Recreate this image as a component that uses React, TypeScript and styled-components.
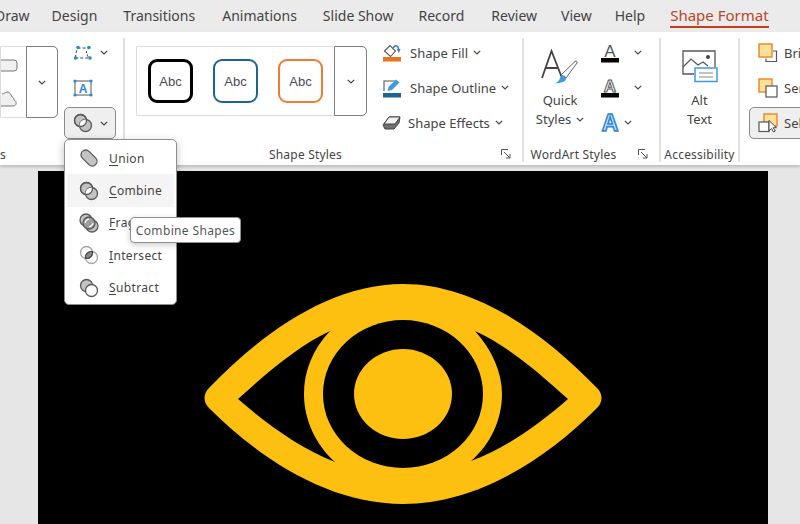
import React from "react";
import styled, { createGlobalStyle } from "styled-components";

const GlobalStyle = createGlobalStyle`
  html, body {
    margin: 0;
    padding: 0;
    background: #e6e6e6;
  }
  * {
    box-sizing: border-box;
  }
  svg {
    flex: none;
  }
`;

const Page = styled.div`
  position: relative;
  width: 800px;
  height: 524px;
  overflow: hidden;
  display: flex;
  flex-direction: column;
  background: #e6e6e6;
  color: #444;
  font-family: "Noto Sans", "Open Sans", sans-serif;
  font-size: 13px;
`;

const TabBar = styled.div`
  display: flex;
  align-items: flex-start;
  height: 32px;
  flex: none;
  background: #ebebeb;
`;

const Tab = styled.div<{ $left: number; $active?: boolean }>`
  position: relative;
  margin-left: ${(p) => p.$left}px;
  height: 32px;
  line-height: 31px;
  font-size: ${(p) => (p.$active ? 15 : 14)}px;
  white-space: nowrap;
  color: ${(p) => (p.$active ? "#b7472a" : "#444")};

  &::after {
    content: "";
    display: ${(p) => (p.$active ? "block" : "none")};
    position: absolute;
    left: 0;
    right: 0;
    top: 26px;
    height: 2px;
    background: #c43e1c;
  }
`;

const Ribbon = styled.div`
  display: flex;
  flex: none;
  height: 133px;
  padding: 6px 0 3px;
  background: #fff;
  box-shadow: 0 2px 3px rgba(0, 0, 0, 0.18);
  z-index: 1;
`;

const Group = styled.div<{ $width: number; $last?: boolean }>`
  display: flex;
  flex-direction: column;
  flex: none;
  width: ${(p) => p.$width}px;
  border-right: ${(p) => (p.$last ? "none" : "2px solid #e1e1e1")};
`;

const GroupBody = styled.div`
  display: flex;
  height: 110px;
`;

const LabelRow = styled.div`
  display: flex;
  align-items: center;
  height: 14px;
`;

const GroupLabel = styled.div<{ $align?: string }>`
  flex: 1;
  font-size: 12px;
  line-height: 14px;
  letter-spacing: 0.2px;
  white-space: nowrap;
  text-align: ${(p) => p.$align || "center"};
`;

const Launcher = styled.svg`
  width: 10px;
  height: 10px;
  margin: -2px 11px 0 15px;
`;

const Gallery = styled.div<{ $width: number; $height: number; $left: number }>`
  display: flex;
  flex: none;
  width: ${(p) => p.$width}px;
  height: ${(p) => p.$height}px;
  margin: 8px 0 0 ${(p) => p.$left}px;
  background: #fff;
  border: 1px solid #dcdcdc;
  border-radius: 0 5px 5px 0;
`;

const ThumbRow = styled.div`
  flex: 1;
  display: flex;
  align-items: center;
  gap: 20px;
  padding-left: 11px;
`;

const Thumb = styled.div<{ $color: string; $thick?: boolean }>`
  width: 45px;
  height: 44px;
  display: flex;
  align-items: center;
  justify-content: center;
  border: ${(p) => (p.$thick ? 3 : 2.5)}px solid ${(p) => p.$color};
  border-radius: 9px;
  font-family: "Liberation Sans", Arial, sans-serif;
  font-size: 13px;
  color: #4a4a5a;
`;

const ShapeStack = styled.div`
  flex: 1;
  display: flex;
  flex-direction: column;
  padding-top: 12px;
  gap: 19px;
`;

const MoreButton = styled.div<{ $width: number }>`
  display: flex;
  flex: none;
  align-items: center;
  justify-content: center;
  width: ${(p) => p.$width}px;
  margin: -1px -1px -1px 0;
  border: 1px solid #7f7f7f;
  border-radius: 0 5px 5px 0;
`;

const ToolColumn = styled.div<{ $left: number; $width?: number }>`
  display: flex;
  flex-direction: column;
  flex: none;
  gap: 4px;
  margin: -1px 0 0 ${(p) => p.$left}px;
  width: ${(p) => (p.$width ? `${p.$width}px` : "auto")};
`;

const ToolRow = styled.div<{ $left?: number; $gap?: number }>`
  display: flex;
  align-items: center;
  height: 31px;
  gap: ${(p) => p.$gap ?? 6}px;
  padding-left: ${(p) => p.$left ?? 0}px;
  white-space: nowrap;
  font-size: 13px;
`;

const RowText = styled.span`
  display: inline-flex;
  align-items: center;
  gap: 5px;
`;

const PressedButton = styled.div<{ $left?: number; $gap?: number }>`
  display: flex;
  align-items: center;
  height: 32px;
  gap: ${(p) => p.$gap ?? 6}px;
  padding-left: ${(p) => p.$left ?? 0}px;
  background: #efefef;
  border: 1px solid #8a8a8a;
  border-radius: 5px;
  white-space: nowrap;
`;

const TallButton = styled.div<{ $width: number }>`
  display: flex;
  flex-direction: column;
  align-items: center;
  flex: none;
  width: ${(p) => p.$width}px;
  padding-top: 6px;
`;

const IconSlot = styled.div`
  display: flex;
  align-items: center;
  justify-content: center;
  height: 44px;
`;

const TallText = styled.div`
  margin-top: 3px;
  text-align: center;
  font-size: 13px;
  line-height: 19px;
  white-space: nowrap;
`;

const Canvas = styled.div`
  flex: 1;
  padding: 6px 0 0 38px;
  min-height: 0;
`;

const Slide = styled.div`
  display: flex;
  justify-content: center;
  width: 730px;
  height: 353px;
  padding-top: 113px;
  background: #000;
`;

const Menu = styled.div`
  position: absolute;
  left: 64px;
  top: 139px;
  width: 113px;
  height: 166px;
  padding: 2px;
  background: #fff;
  border: 1px solid #8f8f8f;
  border-radius: 5px;
  box-shadow: 0 3px 8px rgba(0, 0, 0, 0.25);
  z-index: 2;
`;

const MenuItem = styled.div<{ $active?: boolean }>`
  display: flex;
  align-items: center;
  gap: 10px;
  height: 32.4px;
  padding-left: 12px;
  font-size: 12px;
  letter-spacing: 0.35px;
  white-space: nowrap;
  background: ${(p) => (p.$active ? "#f5f4f4" : "transparent")};

  u {
    text-underline-offset: 2px;
  }
`;

const Tooltip = styled.div`
  position: absolute;
  left: 130px;
  top: 217px;
  width: 111px;
  height: 26px;
  line-height: 25px;
  text-align: center;
  font-size: 12px;
  letter-spacing: 0.35px;
  white-space: nowrap;
  color: #555;
  background: #fff;
  border: 1px solid #8f8f8f;
  border-radius: 4px;
  box-shadow: 0 2px 6px rgba(0, 0, 0, 0.2);
  z-index: 3;
`;

const Chevron = () => (
  <svg width="8" height="5" viewBox="0 0 8 5">
    <path d="M.8.8 4 4 7.200.8" fill="none" stroke="#444" strokeWidth="1.2" />
  </svg>
);

const LauncherIcon = () => (
  <Launcher viewBox="0 0 10 10">
    <path d="M.5 6V.5H7M3 3l6 6M9 5v4H5" fill="none" stroke="#555" strokeWidth="1" />
  </Launcher>
);

const EditShapeIcon = () => (
  <svg width="20" height="16" viewBox="0 0 20 16">
    <path d="M2.500 13C2.500 9 3 6 5 3h11l-3 4 2 2-1 1 2 3H2.500" fill="none" stroke="#444" strokeWidth="1" strokeDasharray="3 2" />
    <g fill="#2b88d8">
      <circle cx="2.500" cy="13" r="1.800" />
      <circle cx="5" cy="2.500" r="1.800" />
      <circle cx="16" cy="2.500" r="1.800" />
      <circle cx="17" cy="13" r="1.800" />
    </g>
  </svg>
);

const TextBoxIcon = () => (
  <svg width="20" height="18" viewBox="0 0 20 18">
    <rect x="2" y="2" width="16" height="14" fill="none" stroke="#555" strokeWidth="1" />
    <g fill="#2b88d8">
      <circle cx="2" cy="2" r="1.600" />
      <circle cx="18" cy="2" r="1.600" />
      <circle cx="2" cy="16" r="1.600" />
      <circle cx="18" cy="16" r="1.600" />
    </g>
    <text x="10" y="14" textAnchor="middle" fontFamily="Liberation Sans" fontWeight="700" fontSize="12" fill="#2b88d8">A</text>
  </svg>
);

const MergeIcon = ({ kind, id }: { kind: string; id: string }) => {
  const stroke = "#5a5a5a";
  const gray = "#c4c2c2";
  if (kind === "union") {
    return (
      <svg width="20" height="20" viewBox="0 0 20 20">
        <path d="M3.400 3.400a4.700 4.700 0 0 1 6.700 0l6.500 6.500a4.700 4.700 0 0 1-6.700 6.700L3.400 10.100a4.700 4.700 0 0 1 0-6.700Z" fill={gray} stroke={stroke} strokeWidth="1.300" />
      </svg>
    );
  }
  const clipId = `clip-${id}`;
  return (
    <svg width="20" height="20" viewBox="0 0 20 20">
      <defs>
        <clipPath id={clipId}>
          <circle cx="7.500" cy="7.500" r="6" />
        </clipPath>
      </defs>
      {kind === "combine" && (
        <>
          <circle cx="7.500" cy="7.500" r="6" fill={gray} stroke={stroke} strokeWidth="1.300" />
          <circle cx="12.500" cy="12.500" r="6" fill={gray} stroke={stroke} strokeWidth="1.300" />
          <circle cx="12.500" cy="12.500" r="6" fill="#fff" clipPath={`url(#${clipId})`} />
          <circle cx="7.500" cy="7.500" r="6" fill="none" stroke={stroke} strokeWidth="1.300" />
        </>
      )}
      {kind === "fragment" && (
        <>
          <circle cx="7" cy="7" r="6" fill={gray} stroke={stroke} strokeWidth="1.300" />
          <circle cx="13" cy="13" r="6" fill={gray} stroke={stroke} strokeWidth="1.300" />
          <circle cx="10" cy="10" r="6" fill="#9d9d9d" stroke={stroke} strokeWidth="1.300" />
          <path d="M6 10a5 5 0 0 1 4-4M10 14a5 5 0 0 0 4-4" fill="none" stroke="#fff" strokeWidth="1.200" />
        </>
      )}
      {kind === "intersect" && (
        <>
          <circle cx="7.500" cy="7.500" r="6" fill="none" stroke="#a5a5a5" strokeWidth="1.300" />
          <circle cx="12.500" cy="12.500" r="6" fill="none" stroke="#a5a5a5" strokeWidth="1.300" />
          <path d="M13.430 6.570A6 6 0 0 1 6.570 13.430A6 6 0 0 1 13.430 6.570Z" fill="#8c8c8c" stroke="#444" strokeWidth="1.200" />
        </>
      )}
      {kind === "subtract" && (
        <>
          <circle cx="7.500" cy="7.500" r="6" fill={gray} stroke={stroke} strokeWidth="1.300" />
          <circle cx="12.500" cy="12.500" r="6" fill="#fff" stroke={stroke} strokeWidth="1.300" />
        </>
      )}
    </svg>
  );
};

const ShapeFillIcon = () => (
  <svg width="20" height="18" viewBox="0 0 20 18">
    <path d="M2.500 7 8 1.500l5.500 5.500L8.500 12.500Z" fill="#fff" stroke="#555" strokeWidth="1.100" />
    <path d="M11 4c2-3 5-3 5.500 1" fill="none" stroke="#2b7cd3" strokeWidth="1.500" />
    <path d="M15 5h3.500l-1.700 4Z" fill="#2b7cd3" />
    <rect x="1" y="13" width="18" height="4.500" fill="#e8741e" />
  </svg>
);

const ShapeOutlineIcon = () => (
  <svg width="20" height="20" viewBox="0 0 20 20">
    <path d="M2 13V3h11" fill="none" stroke="#555" strokeWidth="1.100" />
    <path d="M5.500 13 6.500 9 14 1.500l3.500 3L10 12Z" fill="#3d9be0" />
    <rect x="1" y="15" width="18" height="4.500" fill="#1f6391" />
  </svg>
);

const ShapeEffectsIcon = () => (
  <svg width="20" height="18" viewBox="0 0 20 18">
    <path d="M1 11 7 3h11l-1 6-5 6H3Z" fill="#6f6f6f" stroke="#444" strokeWidth="1" />
    <path d="M7 3h11l-5 7H2Z" fill="#f2f2f2" stroke="#444" strokeWidth="1" />
  </svg>
);

const QuickStylesIcon = () => (
  <svg width="40" height="35" viewBox="0 0 40 35">
    <path d="M2 29 11.500 2 22 29M6 19h12" fill="none" stroke="#444" strokeWidth="1.800" />
    <path d="M21 26 35 12.500c1.500-1 2.500 0 2 1.500L26 29Z" fill="#fff" stroke="#666" strokeWidth="1" />
    <path d="M11 34c5 1 8-1 9-5 .5-2 3-3 5-2 2 2 1 5-2 6-4 1.500-8 1.500-12 1Z" fill="#3d9be0" />
  </svg>
);

const WordArtIcon = ({ kind }: { kind: string }) => {
  if (kind === "effect") {
    return (
      <svg width="20" height="21" viewBox="0 0 20 21">
        <text x="10" y="19" textAnchor="middle" fontFamily="Liberation Sans" fontWeight="700" fontSize="23" fill="#d4ebfb" stroke="#2b88d8" strokeWidth="1.600">A</text>
      </svg>
    );
  }
  const outline = kind === "outline";
  return (
    <svg width="20" height="21" viewBox="0 0 20 21">
      <text x="10" y="15" textAnchor="middle" fontFamily="Liberation Sans" fontWeight={outline ? 700 : 400} fontSize="17" fill={outline ? "#fff" : "#555"} stroke={outline ? "#555" : "none"} strokeWidth="1">A</text>
      <rect x="1" y="16" width="18" height="4.500" fill="#000" />
    </svg>
  );
};

const AltTextIcon = () => (
  <svg width="36" height="33" viewBox="0 0 36 33">
    <path d="M12 24H1V1h32v16" fill="none" stroke="#555" strokeWidth="1.300" />
    <path d="M1 17 9 9l7 6 5-3 5 4" fill="none" stroke="#555" strokeWidth="1.200" />
    <circle cx="26" cy="7" r="2" fill="#444" />
    <rect x="13" y="18" width="22" height="13.500" fill="#fff" stroke="#3d9be0" strokeWidth="1.500" />
    <path d="M17 23h14M17 27h14" stroke="#888" strokeWidth="1" />
  </svg>
);

const ArrangeIcon = ({ kind }: { kind: string }) => {
  if (kind === "forward") {
    return (
      <svg width="20" height="20" viewBox="0 0 20 20">
        <path d="M15 8h3.500v10.500H8V15.500" fill="none" stroke="#555" strokeWidth="1.200" />
        <rect x="1" y="1" width="13" height="13" fill="#fde19a" stroke="#ed8b2d" strokeWidth="1.500" />
      </svg>
    );
  }
  if (kind === "backward") {
    return (
      <svg width="20" height="20" viewBox="0 0 20 20">
        <rect x="1" y="1" width="13" height="13" fill="#fde19a" stroke="#ed8b2d" strokeWidth="1.500" />
        <rect x="8" y="8" width="11" height="11" fill="#fff" stroke="#555" strokeWidth="1.200" />
      </svg>
    );
  }
  return (
    <svg width="20" height="20" viewBox="0 0 20 20">
      <rect x="6" y="1" width="13" height="12" fill="#fde19a" stroke="#ed8b2d" strokeWidth="1.500" />
      <rect x="1" y="9" width="10" height="9.500" fill="#fff" stroke="#555" strokeWidth="1.200" />
      <path d="M11 7.500V18l2.500-2.500 2 3.500 1.800-1-2-3.300h3.200Z" fill="#fff" stroke="#444" strokeWidth="1" />
    </svg>
  );
};

const Eye = () => (
  <svg width="398" height="220" viewBox="204 284 398 220">
    <path
      d="M209 388C262 333 330 284 403 284C476 284 544 333 597 388C603 394 603 402 597 408C544 461 476 504 403 504C330 504 262 461 209 408C203 402 203 394 209 388Z"
      fill="#fec010"
    />
    <path d="M238 399C270 370 300 345 330 331C312 350 304 372 304 394C304 420 316 445 335 462C300 448 268 425 238 399Z" fill="#000" />
    <path d="M568 399C536 370 506 345 475 331C492 350 502 372 502 394C502 420 490 445 471 461C506 448 538 425 568 399Z" fill="#000" />
    <ellipse cx="403" cy="394" rx="80" ry="74" fill="#000" />
    <ellipse cx="403" cy="394" rx="49" ry="45" fill="#fec010" />
  </svg>
);

const tabs = [
  { name: "Draw", left: -5 },
  { name: "Design", left: 22 },
  { name: "Transitions", left: 26 },
  { name: "Animations", left: 27 },
  { name: "Slide Show", left: 26 },
  { name: "Record", left: 25 },
  { name: "Review", left: 27 },
  { name: "View", left: 24 },
  { name: "Help", left: 23 },
  { name: "Shape Format", left: 25, active: true },
];

const mergeItems = [
  { kind: "union", key: "U", rest: "nion" },
  { kind: "combine", key: "C", rest: "ombine", active: true },
  { kind: "fragment", key: "F", rest: "ragment" },
  { kind: "intersect", key: "I", rest: "ntersect" },
  { kind: "subtract", key: "S", rest: "ubtract" },
];

export default function App() {
  return (
    <Page>
      <GlobalStyle />
      <TabBar>
        {tabs.map((t) => (
          <Tab key={t.name} $left={t.left} $active={t.active}>
            {t.name}
          </Tab>
        ))}
      </TabBar>
      <Ribbon>
        <Group $width={125}>
          <GroupBody>
            <Gallery $width={58} $height={72} $left={0}>
              <ShapeStack>
                <svg width="17" height="13" viewBox="0 0 17 13">
                  <rect x="-6" y="1" width="22" height="11" rx="3" fill="#f0f0f0" stroke="#777" />
                </svg>
                <svg width="17" height="16" viewBox="0 0 17 16">
                  <path d="M-2 15H12c4 0 4-5 1-6 0-2-1-3-2-3-1-3-3-5-4-5-3 0-4 2-6 2" fill="#f0f0f0" stroke="#777" />
                </svg>
              </ShapeStack>
              <MoreButton $width={32}>
                <Chevron />
              </MoreButton>
            </Gallery>
            <ToolColumn $left={6} $width={52}>
              <ToolRow $left={9} $gap={7}>
                <EditShapeIcon />
                <Chevron />
              </ToolRow>
              <ToolRow $left={9}>
                <TextBoxIcon />
              </ToolRow>
              <PressedButton $left={8} $gap={7}>
                <MergeIcon kind="combine" id="button" />
                <Chevron />
              </PressedButton>
            </ToolColumn>
          </GroupBody>
          <LabelRow>
            <GroupLabel $align="left">s</GroupLabel>
          </LabelRow>
        </Group>

        <Group $width={399}>
          <GroupBody>
            <Gallery $width={231} $height={70} $left={11}>
              <ThumbRow>
                <Thumb $color="#000" $thick>Abc</Thumb>
                <Thumb $color="#1f6391">Abc</Thumb>
                <Thumb $color="#ed7d31">Abc</Thumb>
              </ThumbRow>
              <MoreButton $width={33}>
                <Chevron />
              </MoreButton>
            </Gallery>
            <ToolColumn $left={15}>
              <ToolRow $gap={8}>
                <ShapeFillIcon />
                <RowText>
                  Shape Fill <Chevron />
                </RowText>
              </ToolRow>
              <ToolRow $gap={8}>
                <ShapeOutlineIcon />
                <RowText>
                  Shape Outline <Chevron />
                </RowText>
              </ToolRow>
              <ToolRow $gap={6}>
                <ShapeEffectsIcon />
                <RowText>
                  Shape Effects <Chevron />
                </RowText>
              </ToolRow>
            </ToolColumn>
          </GroupBody>
          <LabelRow>
            <GroupLabel>Shape Styles</GroupLabel>
            <LauncherIcon />
          </LabelRow>
        </Group>

        <Group $width={137}>
          <GroupBody>
            <TallButton $width={72}>
              <IconSlot>
                <QuickStylesIcon />
              </IconSlot>
              <TallText>
                Quick
                <br />
                <RowText>
                  Styles <Chevron />
                </RowText>
              </TallText>
            </TallButton>
            <ToolColumn $left={4}>
              <ToolRow $gap={14}>
                <WordArtIcon kind="fill" />
                <Chevron />
              </ToolRow>
              <ToolRow $gap={14}>
                <WordArtIcon kind="outline" />
                <Chevron />
              </ToolRow>
              <ToolRow $gap={4}>
                <WordArtIcon kind="effect" />
                <Chevron />
              </ToolRow>
            </ToolColumn>
          </GroupBody>
          <LabelRow>
            <GroupLabel>WordArt Styles</GroupLabel>
            <LauncherIcon />
          </LabelRow>
        </Group>

        <Group $width={79}>
          <GroupBody>
            <TallButton $width={77}>
              <IconSlot>
                <AltTextIcon />
              </IconSlot>
              <TallText>
                Alt
                <br />
                Text
              </TallText>
            </TallButton>
          </GroupBody>
          <LabelRow>
            <GroupLabel>Accessibility</GroupLabel>
          </LabelRow>
        </Group>

        <Group $width={60} $last>
          <GroupBody>
            <ToolColumn $left={9} $width={70}>
              <ToolRow $left={9}>
                <ArrangeIcon kind="forward" />
                Bring Forward
              </ToolRow>
              <ToolRow $left={9}>
                <ArrangeIcon kind="backward" />
                Send Backward
              </ToolRow>
              <PressedButton $left={8}>
                <ArrangeIcon kind="pane" />
                Selection Pane
              </PressedButton>
            </ToolColumn>
          </GroupBody>
        </Group>
      </Ribbon>

      <Canvas>
        <Slide>
          <Eye />
        </Slide>
      </Canvas>

      <Menu>
        {mergeItems.map((m) => (
          <MenuItem key={m.kind} $active={m.active}>
            <MergeIcon kind={m.kind} id={m.kind} />
            <span>
              <u>{m.key}</u>
              {m.rest}
            </span>
          </MenuItem>
        ))}
      </Menu>
      <Tooltip>Combine Shapes</Tooltip>
    </Page>
  );
}
